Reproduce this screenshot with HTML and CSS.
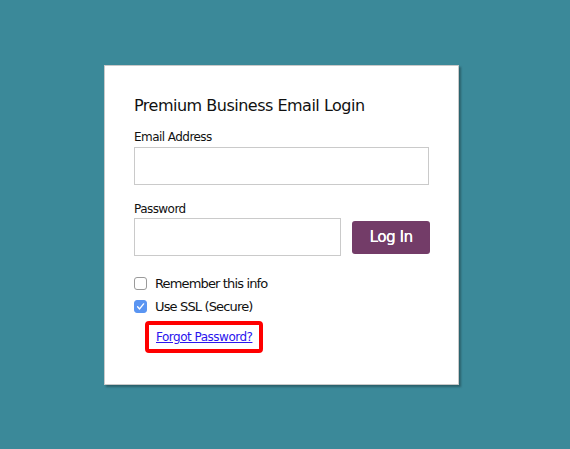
FILE: index.html
```html
<!DOCTYPE html>
<html>
<head>
<meta charset="utf-8">
<link rel="stylesheet" href="styles.css">
</head>
<body>
<div class="page">
  <form class="card">
    <h1 class="title">Premium Business Email Login</h1>
    <label class="label">Email Address</label>
    <input class="field field-email" type="text">
    <label class="label label-pass">Password</label>
    <div class="pass-row">
      <input class="field field-pass" type="password">
      <button class="btn" type="button">Log In</button>
    </div>
    <div class="checks">
      <div class="check-row"><span class="box"></span><span class="check-text">Remember this info</span></div>
      <div class="check-row"><span class="box checked"><svg viewBox="0 0 13 13" width="13" height="13"><path d="M3.6 6.8 L5.6 8.9 L9.6 3.9" fill="none" stroke="#fff" stroke-width="1.4" stroke-linecap="round" stroke-linejoin="round"/></svg></span><span class="check-text">Use SSL (Secure)</span></div>
    </div>
    <div class="forgot"><a href="#" class="forgot-link">Forgot Password?</a></div>
  </form>
</div>
</body>
</html>
```

FILE: styles.css
```css
html, body {
  margin: 0;
  padding: 0;
}
body {
  background: #3b8999;
  width: 570px;
  height: 449px;
  overflow: hidden;
  font-family: "DejaVu Sans", Verdana, sans-serif;
  color: #111;
}
.page {
  padding: 65px 0 0 104px;
}
.card {
  box-sizing: border-box;
  width: 355px;
  height: 320px;
  background: #fff;
  border: 1px solid #c9c9c9;
  box-shadow: 2px 2px 2px rgba(0,0,0,0.3);
  padding: 30px 0 0 29px;
  display: flex;
  flex-direction: column;
  align-items: flex-start;
}
.title {
  margin: 0 0 14px;
  font-size: 16px;
  line-height: 20px;
  font-weight: normal;
  letter-spacing: -0.5px;
  height: 20px;
}
.label {
  display: block;
  font-size: 12px;
  line-height: 15px;
  letter-spacing: -0.55px;
  margin-bottom: 2px;
}
.label-pass {
  margin-top: 17px;
  margin-bottom: 1px;
}
.field {
  box-sizing: border-box;
  height: 38px;
  border: 1px solid #cacaca;
  background: #fff;
  margin: 0;
  padding: 0;
  outline: none;
}
.field-email {
  width: 295px;
}
.pass-row {
  display: flex;
  align-items: center;
  gap: 11px;
}
.field-pass {
  width: 207px;
}
.btn {
  box-sizing: border-box;
  width: 78px;
  height: 33px;
  background: #733c68;
  color: #fff;
  border: none;
  border-radius: 3px;
  font-family: "DejaVu Sans", Verdana, sans-serif;
  font-size: 15px;
  font-weight: normal;
  letter-spacing: -0.4px;
  text-shadow: 0.4px 0 0 #fff;
  padding: 0;
  margin: 0;
}
.checks {
  margin-top: 21px;
  display: flex;
  flex-direction: column;
  gap: 10px;
}
.check-row {
  display: flex;
  align-items: center;
  gap: 8px;
  height: 13px;
  font-size: 13px;
}
.box {
  box-sizing: border-box;
  width: 13px;
  height: 13px;
  border: 1px solid #9a9a9a;
  border-radius: 3px;
  background: #fff;
  display: block;
}
.box.checked {
  background: #5a95f2;
  border-color: #5a95f2;
  position: relative;
}
.box.checked svg {
  position: absolute;
  left: -1px;
  top: -1px;
}
.check-text {
  line-height: 13px;
  letter-spacing: -0.85px;
}
.forgot {
  margin-top: 8px;
  margin-left: 11px;
  box-sizing: border-box;
  width: 118px;
  height: 32px;
  border: 4px solid #ff0000;
  border-radius: 4px;
  display: flex;
  align-items: center;
  padding-left: 7px;
}
.forgot-link {
  color: #2a14ee;
  font-size: 12px;
  letter-spacing: -0.5px;
  text-decoration: underline;
}
```
